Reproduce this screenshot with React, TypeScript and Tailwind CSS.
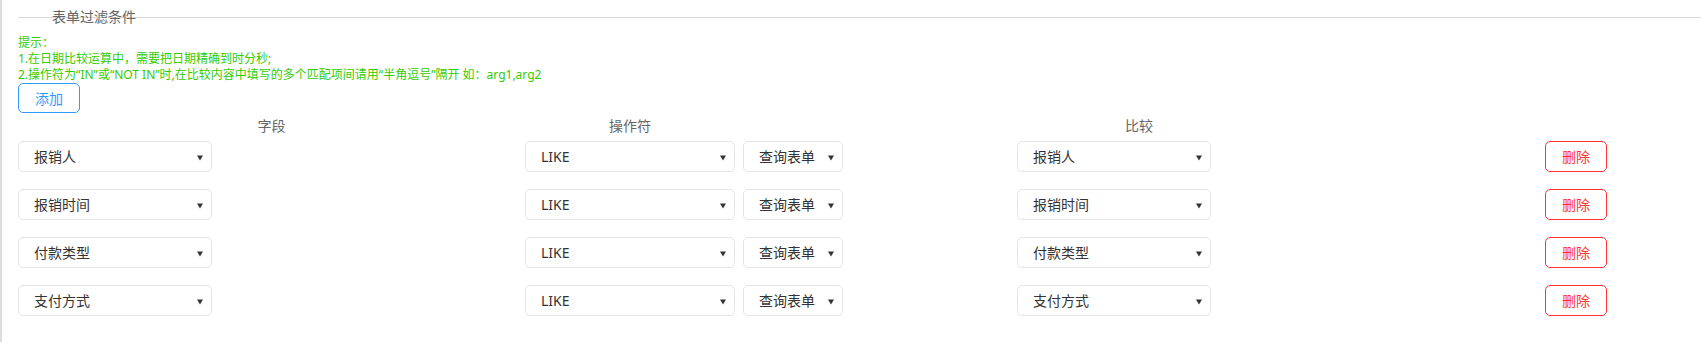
import React from 'react';

type Row = { field: string; op: string; source: string; compare: string };

const rows: Row[] = [
  { field: '报销人', op: 'LIKE', source: '查询表单', compare: '报销人' },
  { field: '报销时间', op: 'LIKE', source: '查询表单', compare: '报销时间' },
  { field: '付款类型', op: 'LIKE', source: '查询表单', compare: '付款类型' },
  { field: '支付方式', op: 'LIKE', source: '查询表单', compare: '支付方式' },
];

const Caret = () => (
  <svg width="6" height="6" viewBox="0 0 6 6" className="mt-[2px] shrink-0">
    <path d="M0 0.5 L6 0.5 L3 5.5 Z" fill="#333" />
  </svg>
);

const FakeSelect: React.FC<{ value: string; width: string }> = ({ value, width }) => (
  <div
    className={`${width} h-[31px] flex items-center justify-between pl-[15px] pr-[8px] border border-[#e4e4e4] rounded-[5px] bg-white text-[14px] text-[#333]`}
  >
    <span className="truncate">{value}</span>
    <Caret />
  </div>
);

const App: React.FC = () => {
  return (
    <div
      className="w-[1701px] h-[342px] bg-white border-l-2 border-[#dcdcdc] overflow-hidden"
      style={{ fontFamily: '"Noto Sans", "Noto Sans CJK SC", sans-serif' }}
    >
      <div className="pt-[17px] pl-4">
        <div className="border-t border-[#d9d9d9]" />
        <div className="-mt-[11px] ml-[34px] text-[14px] leading-[20px] text-[#666]">表单过滤条件</div>

        <div className="mt-[8px] text-[12px] leading-[16px] text-[#33cc00]">
          <div>提示：</div>
          <div>1.在日期比较运算中，需要把日期精确到时分秒;</div>
          <div>2.操作符为“IN”或“NOT IN”时,在比较内容中填写的多个匹配项间请用“半角逗号”隔开 如：arg1,arg2</div>
        </div>

        <button
          type="button"
          className="w-[62px] h-[30px] border border-[#3399ff] rounded-[5px] text-[14px] text-[#3399ff] bg-white"
        >添加</button>

        <div className="grid grid-cols-[507px_492px_528px_auto] h-[24px] items-center text-[14px] text-[#666]">
          <div className="text-center">字段</div>
          <div className="w-[210px] text-center">操作符</div>
          <div className="w-[244px] text-center">比较</div>
          <div />
        </div>

        <div className="mt-[4px] flex flex-col gap-[17px]">
          {rows.map(r => (
            <div key={r.field} className="grid grid-cols-[507px_492px_528px_auto] items-center">
              <FakeSelect value={r.field} width="w-[194px]" />
              <div className="flex gap-[8px]">
                <FakeSelect value={r.op} width="w-[210px]" />
                <FakeSelect value={r.source} width="w-[100px]" />
              </div>
              <FakeSelect value={r.compare} width="w-[194px]" />
              <div>
                <button
                  type="button"
                  className="w-[62px] h-[31px] border border-[#ff3333] rounded-[5px] text-[14px] text-[#ff3333] bg-white"
                >删除</button>
              </div>
            </div>
          ))}
        </div>
      </div>
    </div>
  );
};

export default App;
